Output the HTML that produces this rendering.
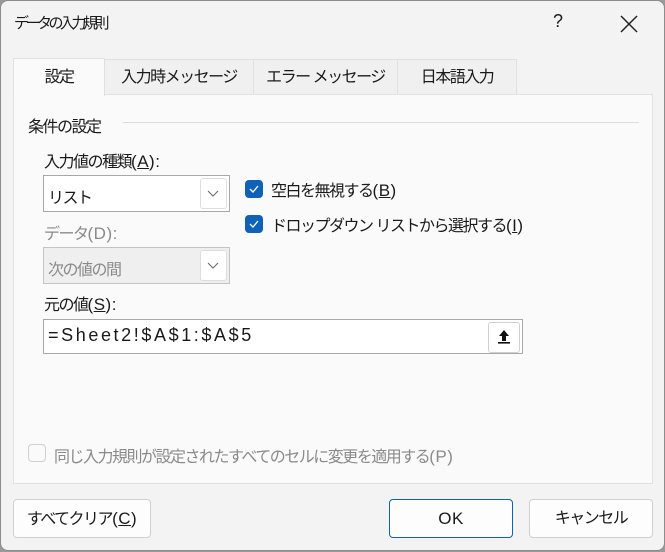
<!DOCTYPE html>
<html><head><meta charset="utf-8"><style>
body{margin:0;width:665px;height:552px;background:#9a9a9a;overflow:hidden;font-family:"Liberation Sans","Noto Sans CJK JP",sans-serif;color:#1a1a1a;font-size:16px;letter-spacing:-1.5px}
.dlg{position:absolute;left:0;top:0;width:663px;height:549px;background:#f3f3f3;border:1px solid #8c8c8c;border-radius:8px}
.a{position:absolute;white-space:nowrap}
.tab{position:absolute;top:58px;height:35px;border:1px solid #e0e0e0;border-bottom:none;background:#f0f0f0;text-align:center;line-height:35px;box-sizing:border-box}
.panel{position:absolute;left:12px;top:93px;width:640px;height:390px;background:#fafafa;border:1px solid #e2e2e2;box-sizing:border-box}
.box{position:absolute;background:#fff;border:1px solid #a8a8a8;box-sizing:border-box}
.dd{position:absolute;right:2px;top:2px;bottom:2px;width:25px;border:1px solid #ddd;border-radius:3px;background:#fff}
.dd svg{position:absolute;left:6px;top:11px}
.cb{position:absolute;width:18px;height:18px;background:#0f62b8;border-radius:4px}
.btn{position:absolute;top:498px;height:39px;background:#fdfdfd;border:1px solid #d0d0d0;border-radius:4px;box-sizing:border-box;text-align:center;line-height:37px}
u{text-decoration:underline}
.l{letter-spacing:0.5px;font-size:17px}
</style></head><body>
<div class="dlg">
<div class="a" style="left:13px;top:11px;font-size:15px;letter-spacing:-3.5px">データの入力規則</div>
<div class="a" style="left:552px;top:10px;font-size:18px">?</div>
<svg class="a" style="left:619px;top:14px" width="18" height="18"><path d="M1 1L17 17M17 1L1 17" stroke="#222" stroke-width="1.5"/></svg>

<div class="tab" style="left:103px;width:150px">入力時メッセージ</div>
<div class="tab" style="left:252px;width:145px">エラー メッセージ</div>
<div class="tab" style="left:396px;width:120px">日本語入力</div>
<div class="panel"></div>
<div class="tab" style="left:12px;top:57px;width:92px;height:38px;background:#fafafa;line-height:37px">設定</div>

<div class="a" style="left:27px;top:112px">条件の設定</div>
<div class="a" style="left:122px;top:121px;width:516px;height:1px;background:#dcdcdc"></div>

<div class="a" style="left:43px;top:147px">入力値の種類<span class="l">(<u>A</u>):</span></div>
<div class="box" style="left:42px;top:174px;width:187px;height:37px"><span class="a" style="left:4px;top:8px">リスト</span><div class="dd"><svg width="12" height="8"><path d="M1 1L6 6L11 1" stroke="#666" fill="none"/></svg></div></div>
<div class="a" style="left:43px;top:219px;color:#8a8a8a">データ<span class="l">(D):</span></div>
<div class="box" style="left:42px;top:246px;width:187px;height:37px;background:#efefef;border-color:#c4c4c4"><span class="a" style="left:4px;top:8px;color:#8a8a8a">次の値の間</span><div class="dd"><svg width="12" height="8"><path d="M1 1L6 6L11 1" stroke="#666" fill="none"/></svg></div></div>

<div class="cb" style="left:244px;top:179px"><svg width="18" height="18"><path d="M5 9L8 12L13 6" stroke="#fff" fill="none" stroke-width="1.3"/></svg></div>
<div class="a" style="left:270px;top:176px">空白を無視する<span class="l">(<u>B</u>)</span></div>
<div class="cb" style="left:244px;top:214px"><svg width="18" height="18"><path d="M5 9L8 12L13 6" stroke="#fff" fill="none" stroke-width="1.3"/></svg></div>
<div class="a" style="left:270px;top:211px">ドロップダウン リストから選択する<span class="l">(<u>I</u>)</span></div>

<div class="a" style="left:43px;top:290px">元の値<span class="l">(<u>S</u>):</span></div>
<div class="box" style="left:42px;top:318px;width:480px;height:35px"><span class="a" style="left:4px;top:5px;font-size:18px;letter-spacing:2.6px">=Sheet2!$A$1:$A$5</span>
<div class="a" style="right:2px;top:2px;width:30px;height:29px;border:1px solid #d0d0d0;border-radius:3px;background:#fff"><svg class="a" style="left:8px;top:6px" width="14" height="16"><path d="M7 1L2 7H5V12H9V7H12Z" fill="#111"/><rect x="1" y="13" width="12" height="1.6" fill="#111"/></svg></div></div>

<div class="a" style="left:27px;top:443px;width:18px;height:18px;border:1px solid #cfcfcf;border-radius:4px;box-sizing:border-box"></div>
<div class="a" style="left:53px;top:442px;color:#8a8a8a">同じ入力規則が設定されたすべてのセルに変更を適用する<span class="l">(P)</span></div>

<div class="btn" style="left:12px;width:138px">すべてクリア<span class="l">(<u>C</u>)</span></div>
<div class="btn l" style="left:388px;width:124px;border-color:#0f62b8">OK</div>
<div class="btn" style="left:528px;width:124px">キャンセル</div>
</div>
</body></html>
